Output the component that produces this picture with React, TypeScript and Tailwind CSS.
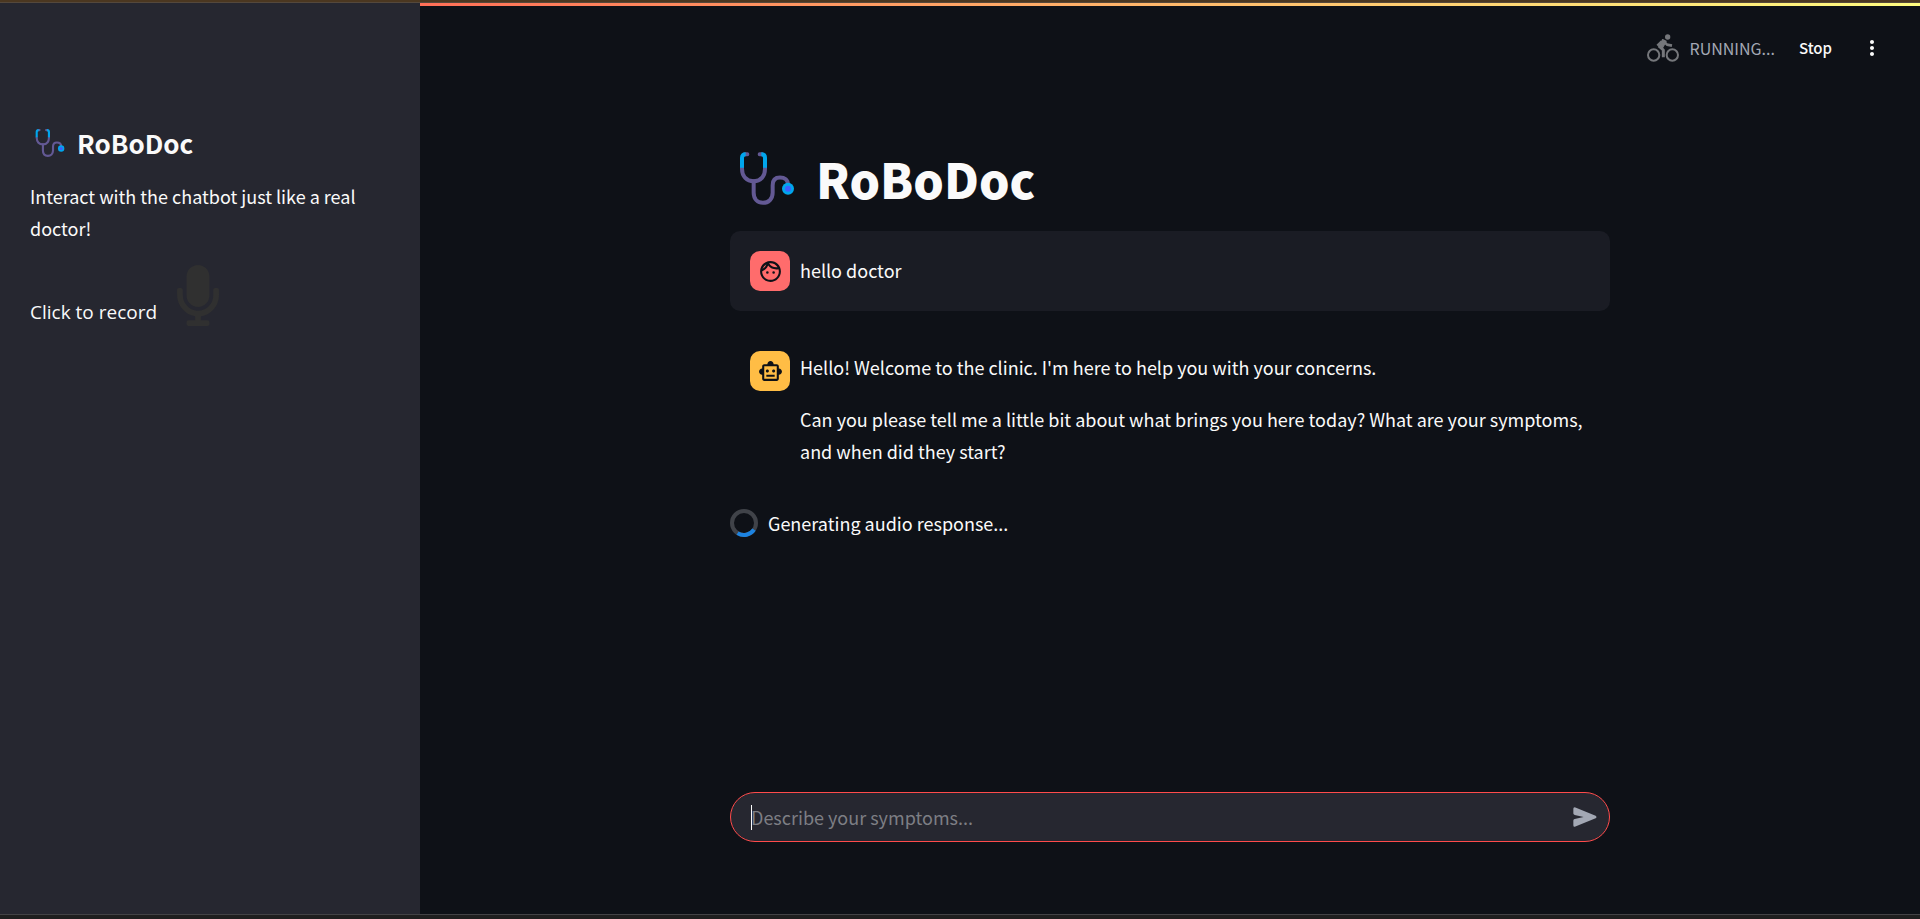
import React from "react";
import { FaMicrophone } from "react-icons/fa";
import { MdMoreVert, MdOutlineFace, MdOutlineSmartToy } from "react-icons/md";

function Stethoscope({ className }: { className: string }) {
  return (
    <svg viewBox="0 0 162 158" className={className} fill="none" strokeLinecap="round" aria-hidden="true">
      <path d="M6 44V50C6 73 20 87 41 87S75 73 75 50V44" stroke="#635994" strokeWidth="12" strokeLinecap="butt" />
      <path d="M41 87V122C41 141 53 152 69 152S98 141 98 122V99C98 84 106 76 120 76S144 83 144 98V104" stroke="#635994" strokeWidth="12" />
      <path d="M15 6H22M66 6H59" stroke="#635994" strokeWidth="12" />
      <path d="M6 47V17C6 10 10 6 17 6M75 47V17C75 10 71 6 64 6" stroke="#00A6ED" strokeWidth="12" strokeLinecap="butt" />
      <circle cx="144" cy="110" r="18" fill="#00A6ED" />
      <circle cx="144" cy="110" r="9" fill="#3F5FFF" />
    </svg>
  );
}

function Cyclist() {
  return (
    <svg viewBox="0 0 96 84" className="h-7 w-8 text-[#75777b]" fill="none" stroke="currentColor" aria-hidden="true">
      <circle cx="20" cy="63" r="17" strokeWidth="6" />
      <circle cx="76" cy="63" r="17" strokeWidth="6" />
      <circle cx="62" cy="9" r="8" fill="currentColor" stroke="none" />
      <path d="M31 35L44 22" strokeWidth="7" />
      <path d="M50 22L38 38L49 48V70" strokeWidth="9" strokeLinejoin="round" />
      <path d="M50 22L60 32L75 35" strokeWidth="8" strokeLinejoin="round" />
      <path d="M47 17L57 22L47 40L36 39Z" fill="currentColor" strokeWidth="4" strokeLinejoin="round" />
    </svg>
  );
}

function Spinner() {
  return (
    <svg viewBox="0 0 28 28" className="size-7 shrink-0" fill="none" strokeWidth="4" aria-hidden="true">
      <circle cx="14" cy="14" r="12" stroke="#404349" />
      <path d="M7.6 24.1A12 12 0 0 0 24 20.6" stroke="#1C83E1" />
    </svg>
  );
}

function Message({
  label,
  icon,
  avatar,
  surface,
  children,
}: {
  label: string;
  icon: React.ReactNode;
  avatar: string;
  surface: string;
  children: React.ReactNode;
}) {
  return (
    <article aria-label={label} className={`flex items-start gap-2.5 rounded-[10px] p-5 ${surface}`}>
      <div className={`flex size-10 shrink-0 items-center justify-center rounded-[10px] text-[#0e1117] ${avatar}`}>
        {icon}
      </div>
      {children}
    </article>
  );
}

export default function App() {
  return (
    <div className="flex min-h-screen flex-col bg-[#0e1117] font-['Noto_Sans_CJK_SC','Noto_Sans',sans-serif] text-lg/8 text-[#fafafa]">
      <div className="h-[3px] border-b border-[#54483c] bg-[#4b3720]" />

      <div className="flex grow">
        <aside className="w-[420px] shrink-0 bg-[#262730] px-[30px] pt-[120px]">
          <h2 className="flex items-center gap-3 pl-[5px] text-[26px]/10 font-bold">
            <Stethoscope className="h-7 w-[30px]" />
            RoBoDoc
          </h2>
          <p className="mt-[17px]">Interact with the chatbot just like a real doctor!</p>
          <div className="mt-[21px] flex items-end gap-5">
            <label htmlFor="record" className="font-['Open_Sans',sans-serif] text-[19px]/7">
              Click to record
            </label>
            <button id="record" type="button" aria-label="Record" className="text-[#303030]">
              <FaMicrophone className="h-[61px] w-[42px]" />
            </button>
          </div>
        </aside>

        <div className="flex min-w-0 grow flex-col">
          <div className="h-[3px] bg-linear-to-r from-[#ff6f57] to-[#fffd80]" />
          <header className="flex items-center justify-end pt-[26px] pr-9">
            <Cyclist />
            <span className="ml-2.5 text-base/8 text-[#a3a8b4]">RUNNING...</span>
            <button type="button" className="ml-6 text-[15px]/8 font-medium">
              Stop
            </button>
            <button type="button" aria-label="Menu" className="ml-7">
              <MdMoreVert className="size-6" />
            </button>
          </header>

          <main className="mx-auto flex w-full max-w-[880px] grow flex-col pt-[81px]">
            <h1 className="flex items-center gap-[22px] pl-2.5 text-[48px]/[66px] font-black">
              <Stethoscope className="h-[53px] w-[54px]" />
              RoBoDoc
            </h1>

            <div className="mt-5 flex flex-col gap-5">
              <Message
                label="User message"
                icon={<MdOutlineFace className="size-[25px]" />}
                avatar="bg-[#ff6c6c]"
                surface="bg-[#1a1c24]"
              >
                <p className="pt-[3px]">hello doctor</p>
              </Message>
              <Message
                label="Assistant message"
                icon={<MdOutlineSmartToy className="size-[25px]" />}
                avatar="bg-[#ffbd45]"
                surface="bg-transparent"
              >
                <div className="flex flex-col gap-5">
                  <p>Hello! Welcome to the clinic. I'm here to help you with your concerns.</p>
                  <p>
                    Can you please tell me a little bit about what brings you here today? What are your symptoms, and
                    when did they start?
                  </p>
                </div>
              </Message>
              <div role="status" className="flex items-center gap-2.5">
                <Spinner />
                Generating audio response...
              </div>
            </div>

            <form className="relative mt-auto mb-[72px] flex h-[50px] items-center rounded-full border border-[#ff4b4b] bg-[#262730] pr-3 pl-5">
              <span className="absolute left-5 h-[25px] w-px bg-[#fafafa]" />
              <input
                type="text"
                aria-label="Describe your symptoms"
                placeholder="Describe your symptoms..."
                className="min-w-0 grow bg-transparent caret-transparent outline-none placeholder:text-[#7d7e84]"
              />
              <button type="submit" aria-label="Send" className="text-[#a3a8b4]">
                <svg viewBox="0 0 70 58" className="h-5 w-6" fill="currentColor" aria-hidden="true">
                  <path d="M1 5Q1-1 7 1L66 25Q71 29 66 33L7 57Q1 59 1 53V39Q1 36 5 35L31 29L5 23Q1 22 1 19Z" />
                </svg>
              </button>
            </form>
          </main>
        </div>
      </div>

      <div className="h-[5px] border-t border-[#434346] bg-[#1f1f1f]" />
    </div>
  );
}
